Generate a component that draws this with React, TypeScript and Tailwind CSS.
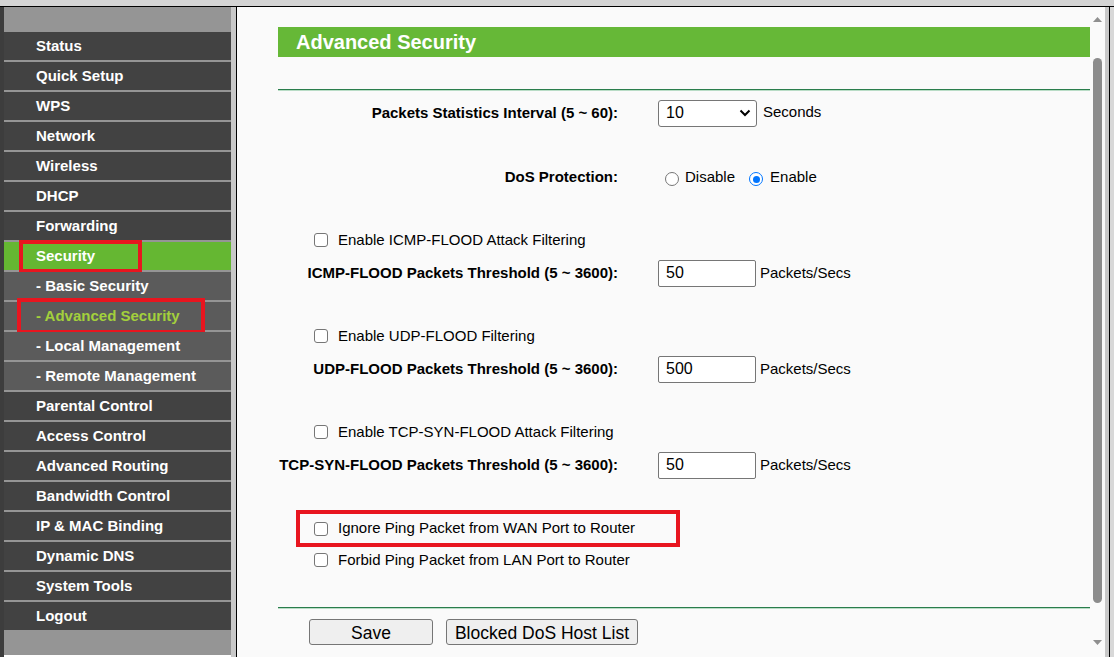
import type { ReactNode } from "react";

type SideItem = { label: string; sub?: boolean; active?: boolean; current?: boolean; box?: string };

const sideItems: SideItem[] = [
  { label: "Status" },
  { label: "Quick Setup" },
  { label: "WPS" },
  { label: "Network" },
  { label: "Wireless" },
  { label: "DHCP" },
  { label: "Forwarding" },
  { label: "Security", active: true, box: "left-[15px] top-[-2px] h-[33px] w-[123px]" },
  { label: "- Basic Security", sub: true },
  { label: "- Advanced Security", sub: true, current: true, box: "left-[13px] top-[-4px] h-[36px] w-[188px]" },
  { label: "- Local Management", sub: true },
  { label: "- Remote Management", sub: true },
  { label: "Parental Control" },
  { label: "Access Control" },
  { label: "Advanced Routing" },
  { label: "Bandwidth Control" },
  { label: "IP & MAC Binding" },
  { label: "Dynamic DNS" },
  { label: "System Tools" },
  { label: "Logout" },
];

const Sidebar = () => (
  <div className="flex w-[227px] shrink-0 flex-col bg-[#959595]">
    <div className="h-[25px] shrink-0" />
    {sideItems.map((item, i) => (
      <div key={item.label} className="shrink-0">
        <div
          className={`relative flex h-[28px] items-center pl-[32px] text-[15px] font-bold ${
            item.active ? "bg-[#65b732]" : item.sub ? "bg-[#5b5b5b]" : "bg-[#424242]"
          } ${item.current ? "text-[#a3d03c]" : "text-white"}`}
        >
          {item.label}
          {item.box && <div className={`absolute border-4 border-[#e8151f] ${item.box}`} />}
        </div>
        {i < sideItems.length - 1 && <div className="h-[2px] bg-[#959595]" />}
      </div>
    ))}
    <div className="flex-1" />
    <div className="h-[2px] shrink-0 bg-white" />
  </div>
);

const Label = ({ children }: { children: ReactNode }) => (
  <div className="flex w-[340px] shrink-0 justify-end whitespace-nowrap text-[15px] font-bold text-black">
    {children}
  </div>
);

const Checkbox = () => (
  <span className="block h-[14px] w-[14px] shrink-0 rounded-[3px] border border-[#767676] bg-white" />
);

const CheckRow = ({ text, className = "" }: { text: string; className?: string }) => (
  <div className={`flex items-center pl-[36px] ${className}`}>
    <Checkbox />
    <span className="ml-[10px] whitespace-nowrap text-[15px] text-black">{text}</span>
  </div>
);

const NumberRow = ({ label, value, className = "" }: { label: string; value: string; className?: string }) => (
  <div className={`flex h-[28px] items-center ${className}`}>
    <Label>{label}</Label>
    <input
      readOnly
      defaultValue={value}
      className="ml-[40px] h-[27px] w-[98px] rounded-[2px] border border-[#767676] bg-white pl-[7px] text-[16px] text-black outline-none"
    />
    <span className="ml-[4px] text-[15px] text-black">Packets/Secs</span>
  </div>
);

const Radio = ({ checked }: { checked?: boolean }) =>
  checked ? (
    <span className="flex h-[14px] w-[14px] shrink-0 items-center justify-center rounded-full border-[1.5px] border-[#0075ff] bg-white">
      <span className="block h-[7px] w-[7px] rounded-full bg-[#0075ff]" />
    </span>
  ) : (
    <span className="block h-[14px] w-[14px] shrink-0 rounded-full border border-[#767676] bg-white" />
  );

const GreenLine = ({ className = "" }: { className?: string }) => (
  <div className={`shrink-0 ${className}`}>
    <div className="h-px bg-[#2a7d4c]" />
    <div className="h-px bg-[#b9dcc6]" />
  </div>
);

const Content = () => (
  <div className="flex w-[853px] shrink-0 flex-col bg-[#fafafa] pl-[41px] pt-[20px]">
    <div className="flex h-[30px] shrink-0 items-center bg-[#66b837] pb-[1px] pl-[18px] text-[20px] font-bold text-white">
      Advanced Security
    </div>
    <GreenLine className="mt-[32px]" />

    <div className="mt-[8px] flex h-[28px] items-center">
      <Label>Packets Statistics Interval (5 ~ 60):</Label>
      <div className="ml-[40px] flex h-[27px] w-[99px] items-center justify-between rounded-[3px] border border-[#767676] bg-white pl-[7px] pr-[5px] text-[16px] text-black">
        <span>10</span>
        <svg width="12" height="8" viewBox="0 0 12 8">
          <polyline points="1.5,1.5 6,6 10.5,1.5" fill="none" stroke="#000" strokeWidth="2" />
        </svg>
      </div>
      <span className="ml-[6px] -translate-y-[1px] text-[15px] text-black">Seconds</span>
    </div>

    <div className="mt-[36px] flex h-[28px] items-center">
      <Label>DoS Protection:</Label>
      <div className="ml-[47px] flex items-center text-[15px] text-black">
        <span className="block translate-y-[2px]">
          <Radio />
        </span>
        <span className="ml-[6px]">Disable</span>
        <span className="ml-[14px] block translate-y-[2px]">
          <Radio checked />
        </span>
        <span className="ml-[7px]">Enable</span>
      </div>
    </div>

    <CheckRow text="Enable ICMP-FLOOD Attack Filtering" className="mt-[35px] h-[28px]" />
    <NumberRow label="ICMP-FLOOD Packets Threshold (5 ~ 3600):" value="50" className="mt-[5px]" />

    <CheckRow text="Enable UDP-FLOOD Filtering" className="mt-[35px] h-[28px]" />
    <NumberRow label="UDP-FLOOD Packets Threshold (5 ~ 3600):" value="500" className="mt-[5px]" />

    <CheckRow text="Enable TCP-SYN-FLOOD Attack Filtering" className="mt-[35px] h-[28px]" />
    <NumberRow label="TCP-SYN-FLOOD Packets Threshold (5 ~ 3600):" value="50" className="mt-[5px]" />

    <div className="ml-[18px] mt-[31px] flex h-[37px] w-[384px] items-center border-4 border-[#e8151f] pl-[14px]">
      <Checkbox />
      <span className="ml-[10px] whitespace-nowrap text-[15px] text-black">
        Ignore Ping Packet from WAN Port to Router
      </span>
    </div>
    <CheckRow text="Forbid Ping Packet from LAN Port to Router" className="h-[26px]" />

    <GreenLine className="mt-[34px]" />

    <div className="mt-[10px] flex pl-[31px]">
      <button className="h-[26px] w-[124px] rounded-[3px] border border-[#767676] bg-[#efefef] text-[17.5px] text-black">
        Save
      </button>
      <button className="ml-[13px] h-[26px] w-[192px] rounded-[3px] border border-[#767676] bg-[#efefef] text-[17.5px] text-black">
        Blocked DoS Host List
      </button>
    </div>
  </div>
);

const Scrollbar = () => (
  <div className="flex w-[15px] shrink-0 flex-col bg-[#fafafa]">
    <svg className="ml-[3px] mt-[10px] shrink-0" width="9" height="5" viewBox="0 0 9 5">
      <polygon points="0,5 4.5,0 9,5" fill="#8f8f8f" />
    </svg>
    <div className="ml-[3px] mt-[36px] h-[545px] w-[9px] shrink-0 rounded-full bg-[#8c8c8c]" />
    <svg className="ml-[3px] mt-[37px] shrink-0" width="9" height="5" viewBox="0 0 9 5">
      <polygon points="0,0 9,0 4.5,5" fill="#8f8f8f" />
    </svg>
  </div>
);

export default function App() {
  return (
    <div className="flex h-[657px] w-[1114px] flex-col overflow-hidden bg-[#d4d4d4] font-['Liberation_Sans',Arial,sans-serif]">
      <div className="h-[6px] shrink-0 bg-[#d4d4d4]" />
      <div className="h-px shrink-0 bg-black" />
      <div className="flex min-h-0 flex-1">
        <div className="w-[4px] shrink-0 bg-[#3d3d3d]" />
        <Sidebar />
        <div className="w-[5px] shrink-0 bg-[#c8c8c8]" />
        <div className="w-px shrink-0 bg-black" />
        <Content />
        <Scrollbar />
        <div className="w-[4px] shrink-0 bg-[#c8c8c8]" />
        <div className="w-px shrink-0 bg-black" />
        <div className="w-[4px] shrink-0 bg-[#d8d8d8]" />
      </div>
    </div>
  );
}
